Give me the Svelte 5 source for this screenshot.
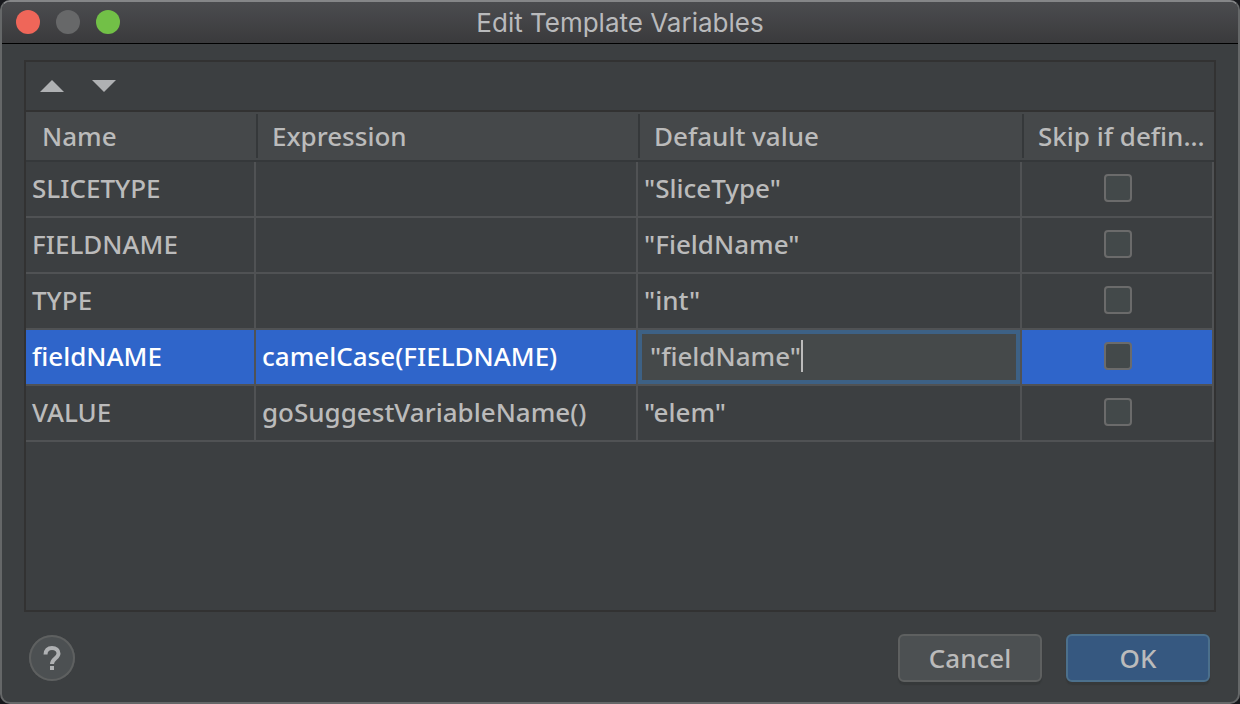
<script>
  let variables = $state([
    { name: 'SLICETYPE', expression: '', value: '"SliceType"', skip: false },
    { name: 'FIELDNAME', expression: '', value: '"FieldName"', skip: false },
    { name: 'TYPE', expression: '', value: '"int"', skip: false },
    { name: 'fieldNAME', expression: 'camelCase(FIELDNAME)', value: '"fieldName"', skip: false },
    { name: 'VALUE', expression: 'goSuggestVariableName()', value: '"elem"', skip: false }
  ]);
  let selected = $state(3);

  function move(step) {
    const target = selected + step;
    if (target < 0 || target >= variables.length) return;
    const row = variables[selected];
    variables[selected] = variables[target];
    variables[target] = row;
    selected = target;
  }
</script>

<div class="window">
  <header class="titlebar">
    <div class="lights">
      <button class="light close" aria-label="Close"></button>
      <button class="light minimize" aria-label="Minimize"></button>
      <button class="light zoom" aria-label="Zoom"></button>
    </div>
    <h1>Edit Template Variables</h1>
  </header>

  <main class="content">
    <section class="panel">
      <div class="toolbar">
        <button class="tool" aria-label="Move up" onclick={() => move(-1)}>
          <svg width="24" height="12" viewBox="0 0 24 12"><path d="M0 12L12 0L24 12Z" fill="#afb1b3" /></svg>
        </button>
        <button class="tool" aria-label="Move down" onclick={() => move(1)}>
          <svg width="24" height="12" viewBox="0 0 24 12"><path d="M0 0H24L12 12Z" fill="#afb1b3" /></svg>
        </button>
      </div>
      <table>
        <colgroup>
          <col class="col-name" />
          <col class="col-expression" />
          <col />
          <col class="col-skip" />
        </colgroup>
        <thead>
          <tr>
            <th scope="col"><span>Name</span></th>
            <th scope="col"><span>Expression</span></th>
            <th scope="col"><span>Default value</span></th>
            <th scope="col"><span>Skip if defin...</span></th>
          </tr>
        </thead>
        <tbody>
          {#each variables as row, i (row.name)}
            <tr class:selected={i === selected} onclick={() => (selected = i)}>
              <td>{row.name}</td>
              <td>{row.expression}</td>
              {#if i === selected}
                <td class="editing">
                  <div class="editor">
                    <input type="text" aria-label="Default value" bind:value={row.value} />
                    <span class="caret"></span>
                  </div>
                </td>
              {:else}
                <td>{row.value}</td>
              {/if}
              <td class="skip"><input type="checkbox" aria-label="Skip if defined" bind:checked={row.skip} /></td>
            </tr>
          {/each}
        </tbody>
      </table>
    </section>

    <footer>
      <button class="help" aria-label="Help">
        <svg width="46" height="46" viewBox="0 0 46 46">
          <path d="M16.5 19.5C16.5 15.5 19 13 23 13C27 13 29.500 15.300 29.500 18.500C29.500 23 23 23.500 23 29" fill="none" stroke="#afb1b3" stroke-width="4" />
          <rect x="21" y="31" width="4" height="4" fill="#afb1b3" />
        </svg>
      </button>
      <div class="actions">
        <button class="action">Cancel</button>
        <button class="action primary">OK</button>
      </div>
    </footer>
  </main>
</div>

<style>
  :global(body) {
    margin: 0;
    background: #17181c;
  }

  .window,
  .window * {
    box-sizing: border-box;
  }

  .window {
    display: flex;
    flex-direction: column;
    min-height: 100vh;
    border: 2px solid #656768;
    border-top-color: #858688;
    border-radius: 10px;
    overflow: hidden;
    background: #3c3f41;
    color: #bbbbbb;
    font: 500 26px/32px "Noto Sans", "Open Sans", sans-serif;
  }

  button {
    padding: 0;
    border: 0;
    background: none;
    color: inherit;
    font: inherit;
  }

  .titlebar {
    display: grid;
    grid-template-columns: 1fr auto 1fr;
    align-items: center;
    height: 42px;
    padding: 0 14px 2px;
    border-bottom: 1px solid #000;
    background: linear-gradient(#4b4c4f, #3a3a3c);
  }

  .lights {
    display: flex;
    gap: 16px;
  }

  .light {
    width: 24px;
    height: 24px;
    border-radius: 50%;
  }

  .close { background: #ef6659; }
  .minimize { background: #676869; }
  .zoom { background: #72c047; }

  h1 {
    margin: 0;
    padding-top: 2px;
    color: #b9babc;
    font: 400 26px/32px Inter, sans-serif;
  }

  .content {
    display: flex;
    flex: 1;
    flex-direction: column;
    padding: 16px 22px 20px;
  }

  .panel {
    flex: 1;
    border: 2px solid #323232;
  }

  .toolbar {
    display: flex;
    gap: 28px;
    height: 50px;
    padding: 0 14px;
    border-bottom: 2px solid #323232;
  }

  .tool {
    display: grid;
    place-items: center;
    width: 24px;
  }

  table {
    width: 100%;
    border-collapse: separate;
    border-spacing: 0;
    table-layout: fixed;
  }

  .col-name { width: 230px; }
  .col-expression { width: 382px; }
  .col-skip { width: 192px; }

  th {
    height: 50px;
    padding: 0;
    border-bottom: 2px solid #35383a;
    background: #45484a;
    font-weight: 500;
    text-align: left;
    white-space: nowrap;
  }

  th span {
    display: block;
    padding: 6px 0 6px 14px;
    border-left: 2px solid #35383a;
  }

  th:first-child span {
    border-color: transparent;
  }

  td {
    height: 56px;
    padding: 0 6px 2px;
    border-right: 2px solid #505254;
    border-bottom: 2px solid #505254;
    white-space: nowrap;
  }

  .selected td {
    background: #2f65ca;
    color: #fff;
  }

  .selected td.editing {
    padding: 0;
  }

  .editor {
    display: flex;
    align-items: center;
    height: 54px;
    padding: 0 8px 2px;
    border: 4px solid #3d6185;
    background: #45494a;
  }

  .editor input {
    field-sizing: content;
    height: 32px;
    padding: 0;
    border: 0;
    outline: 0;
    background: none;
    color: #bbbbbb;
    font: inherit;
    caret-color: transparent;
  }

  .caret {
    width: 2px;
    height: 32px;
    background: #bbbbbb;
  }

  td.skip {
    padding: 0 5px 2px 7px;
  }

  .skip input {
    appearance: none;
    display: block;
    width: 28px;
    height: 28px;
    margin: 0 auto;
    border: 2px solid #6b6b6b;
    border-radius: 4px;
    background: #43494a;
  }

  .skip input:checked {
    background: #afb1b3;
  }

  footer {
    display: flex;
    align-items: center;
    justify-content: space-between;
    padding: 22px 6px 0 5px;
  }

  .help {
    display: grid;
    place-items: center;
    width: 46px;
    height: 46px;
    border-radius: 50%;
    background: #4c5052;
    box-shadow: inset 0 0 0 2px #5e6060;
  }

  .actions {
    display: flex;
    gap: 24px;
  }

  .action {
    width: 144px;
    height: 48px;
    border: 2px solid #5e6060;
    border-radius: 6px;
    background: #4c5052;
    box-shadow: 0 3px 1px #36393a;
  }

  .primary {
    border-color: #4c708c;
    background: #365880;
  }
</style>
